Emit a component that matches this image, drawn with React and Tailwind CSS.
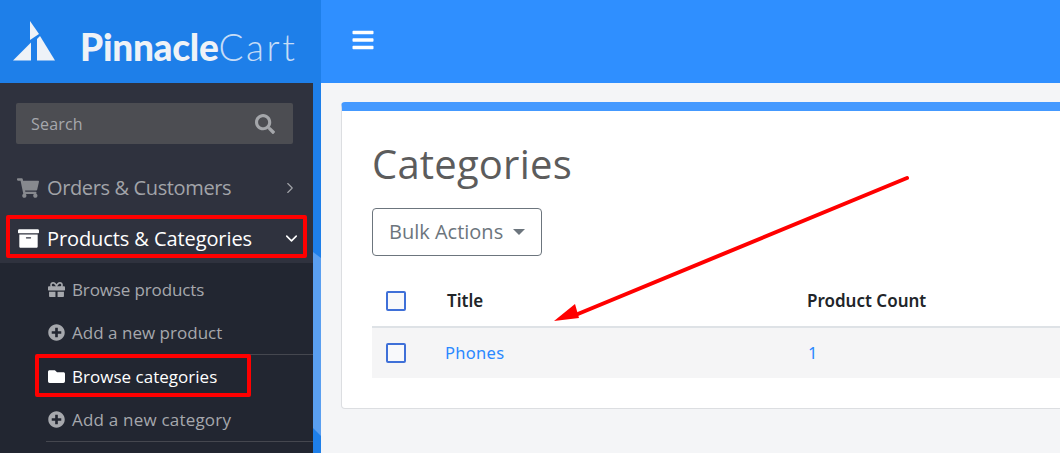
import React from "react";
import { FaShoppingCart, FaArchive, FaGift, FaPlusCircle, FaFolder, FaSearch, FaBars } from "react-icons/fa";
import { ChevronRight, ChevronDown } from "lucide-react";

const font = "font-['Open_Sans',sans-serif]";

function Logo() {
  return (
    <div className="flex items-end h-full pl-[13px] pb-[21px]">
      <svg width="43" height="41" viewBox="0 0 43 41" className="shrink-0">
        <path d="M17 0 L17 19 L26 13 Z" fill="#eef2f7" />
        <path d="M0 39.5 L18 21.5 L18 39.5 Z" fill="#eef2f7" />
        <path d="M24 39.5 L24 18 L27 15 L42 39.5 Z" fill="#eef2f7" />
      </svg>
      <div className="ml-[24px] mb-[-3px] flex items-baseline text-[37px] leading-[37px] text-[#eef2f7] font-['Lato','Inter',sans-serif] tracking-[-0.3px]">
        <span className="font-black">Pinnacle</span>
        <span className="font-light text-[#c5dcf7] tracking-[2.6px]">Cart</span>
      </div>
    </div>
  );
}

function SubItem({ icon, label, active, border, track }) {
  return (
    <div className={`ml-[46px] h-[43.5px] flex items-center gap-[7px] pl-[2px] text-[17px] ${track} ${active ? "text-white" : "text-[#a6a8ad]"} ${border ? "border-b border-[#45474f]" : ""}`}>
      <span className="w-[17px] flex justify-center text-[17px]">{icon}</span>
      <span>{label}</span>
    </div>
  );
}

function Sidebar() {
  return (
    <aside className="w-[321px] shrink-0 h-[370px] flex bg-[#1e7fe9]">
      <div className="w-[313px] h-full bg-[#2f323e]">
        <div className="px-[16px] pt-[20px]">
          <div className="w-[277px] h-[41px] rounded-[2px] bg-[#4c4d52] flex items-center justify-between pl-[15px] pr-[18px] pt-[1px] text-[#a6a8ad] text-[16px] tracking-[0.2px]">
            <span>Search</span>
            <FaSearch className="text-[20px] text-[#a4a6aa]" />
          </div>
        </div>
        <div className="h-[50px] mt-[19px] flex items-center pl-[17px] pr-[14px] text-[#a2a4a9] text-[20px] tracking-[-0.37px]">
          <FaShoppingCart className="text-[22px] text-[#87898e] shrink-0" />
          <span className="ml-[8px] flex-1">Orders &amp; Customers</span>
          <ChevronRight size={18} strokeWidth={1.5} />
        </div>
        <div className="h-[50px] pt-[1px] flex items-center pl-[18px] pr-[12px] text-white text-[20px] tracking-[-0.09px]">
          <FaArchive className="text-[21px] shrink-0" />
          <span className="ml-[8px] flex-1">Products &amp; Categories</span>
          <ChevronDown size={19} strokeWidth={2} />
        </div>
        <div className="bg-[#222631] h-[190px] pt-[5px]">
          <SubItem icon={<FaGift />} label="Browse products" track="tracking-[-0.13px]" />
          <SubItem icon={<FaPlusCircle />} label="Add a new product" border track="tracking-[0.02px]" />
          <SubItem icon={<FaFolder className="text-white" />} label="Browse categories" active track="tracking-[0.02px]" />
          <SubItem icon={<FaPlusCircle />} label="Add a new category" border track="tracking-[0.2px]" />
        </div>
      </div>
      <div className="w-[8px] h-full">
        <div className="mt-[169px] h-[184px] bg-[#5a9ff0] [clip-path:polygon(0_0,100%_6px,100%_100%,0_calc(100%-8px))]" />
      </div>
    </aside>
  );
}

function Checkbox() {
  return <span className="block w-[20px] h-[20px] rounded-[2px] border-[2px] border-[#3f70d8] bg-[#f8f9fb]" />;
}

function Main() {
  return (
    <main className="flex-1 min-w-0 overflow-hidden bg-[#f4f5f7] pl-[20px] pt-[19px]">
      <section className="w-[900px] h-[307px] rounded-[4px] bg-white border border-[#dcdee1] border-t-[9px] border-t-[#4499ff] pl-[30px]">
        <h1 className="mt-[30px] text-[40px] leading-[46px] tracking-[0.2px] text-[#5c5c5c]">Categories</h1>
        <button className="mt-[21px] w-[170px] h-[48px] rounded-[4px] border border-[#6c757d] flex items-center pl-[16px] gap-[10px] text-[20px] text-[#6c757d]">
          Bulk Actions
          <span className="w-0 h-0 border-x-[6px] border-x-transparent border-t-[6px] border-t-[#6c757d]" />
        </button>
        <div className="h-[72px] border-b-2 border-[#dee2e6] flex items-center pt-[20px] text-[#212529] text-[16px]">
          <span className="ml-[14px]"><Checkbox /></span>
          <span className="ml-[41px] w-[360px] font-semibold font-['Noto_Sans',sans-serif] text-[17px]">Title</span>
          <span className="font-semibold font-['Noto_Sans',sans-serif] text-[17px]">Product Count</span>
        </div>
        <div className="h-[50px] bg-[#f5f5f6] flex items-center text-[16.5px] text-[#2a88ff] font-['Noto_Sans',sans-serif]">
          <span className="ml-[14px]"><Checkbox /></span>
          <span className="ml-[39px] w-[363px] tracking-[0.3px] pt-[1px]">Phones</span>
          <span className="pt-[1px]">1</span>
        </div>
      </section>
    </main>
  );
}

export default function App() {
  return (
    <div className={`relative w-[1060px] h-[453px] overflow-hidden bg-[#f4f5f7] ${font}`}>
      <header className="flex h-[83px]">
        <div className="w-[321px] bg-[#1e7fe9]"><Logo /></div>
        <div className="flex-1 bg-[#2f8fff] flex items-center pl-[30px] pb-[4px]">
          <FaBars className="text-white text-[24px]" />
        </div>
      </header>
      <div className="flex h-[370px]">
        <Sidebar />
        <Main />
      </div>
      <div className="absolute left-[6px] top-[215px] w-[301px] h-[43px] border-[4px] border-[#ff0000] rounded-[2px]" />
      <div className="absolute left-[35px] top-[354px] w-[216px] h-[43px] border-[4px] border-[#ff0000] rounded-[2px]" />
      <svg className="absolute left-[545px] top-[170px]" width="370" height="155" viewBox="0 0 370 155">
        <path d="M362 8 L28 146" stroke="#ff0000" strokeWidth="4" strokeLinecap="round" />
        <path d="M9 151 L30 134 L34 148 Z" fill="#ff0000" />
      </svg>
    </div>
  );
}
